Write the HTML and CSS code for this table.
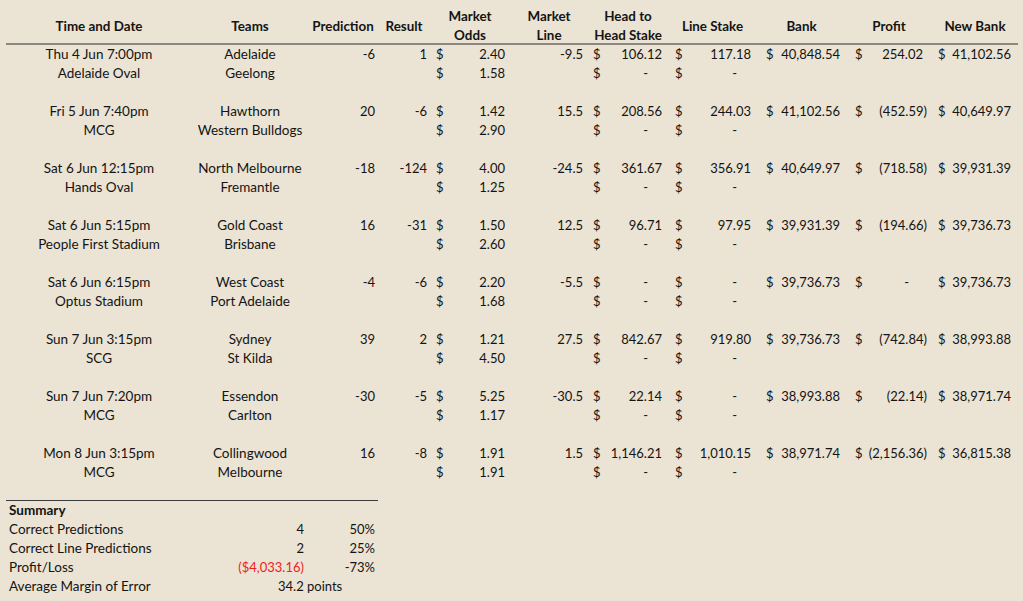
FILE: index.html
```html
<!DOCTYPE html>
<html lang="en">
<head>
<meta charset="utf-8">
<title>Tipping Results</title>
<link rel="stylesheet" href="styles.css">
</head>
<body>
<div class="sheet">
  <div class="grid head">
    <div>Time and Date</div>
    <div>Teams</div>
    <div>Prediction</div>
    <div>Result</div>
    <div>Market<br>Odds</div>
    <div>Market<br>Line</div>
    <div>Head to<br>Head Stake</div>
    <div>Line Stake</div>
    <div>Bank</div>
    <div>Profit</div>
    <div>New Bank</div>
  </div>

  <div class="game">
    <div class="grid row">
      <div class="ctr txt">Thu 4 Jun 7:00pm</div><div class="ctr txt">Adelaide</div><div class="num pred">-6</div><div class="num res">1</div>
      <div class="m odds"><span>$</span><span>2.40</span></div><div class="num line">-9.5</div>
      <div class="m h2h"><span>$</span><span>106.12</span></div><div class="m ls"><span>$</span><span>117.18</span></div>
      <div class="m bank"><span>$</span><span>40,848.54</span></div><div class="m profit"><span>$</span><span>254.02</span></div><div class="m nb"><span>$</span><span>41,102.56</span></div>
    </div>
    <div class="grid row">
      <div class="ctr txt">Adelaide Oval</div><div class="ctr txt">Geelong</div><div></div><div></div>
      <div class="m odds"><span>$</span><span>1.58</span></div><div></div>
      <div class="m h2h"><span>$</span><span class="dash">-</span></div><div class="m ls"><span>$</span><span class="dash">-</span></div>
    </div>
  </div>

  <div class="game">
    <div class="grid row">
      <div class="ctr txt">Fri 5 Jun 7:40pm</div><div class="ctr txt">Hawthorn</div><div class="num pred">20</div><div class="num res">-6</div>
      <div class="m odds"><span>$</span><span>1.42</span></div><div class="num line">15.5</div>
      <div class="m h2h"><span>$</span><span>208.56</span></div><div class="m ls"><span>$</span><span>244.03</span></div>
      <div class="m bank"><span>$</span><span>41,102.56</span></div><div class="m profit"><span>$</span><span class="neg">(452.59)</span></div><div class="m nb"><span>$</span><span>40,649.97</span></div>
    </div>
    <div class="grid row">
      <div class="ctr txt">MCG</div><div class="ctr txt">Western Bulldogs</div><div></div><div></div>
      <div class="m odds"><span>$</span><span>2.90</span></div><div></div>
      <div class="m h2h"><span>$</span><span class="dash">-</span></div><div class="m ls"><span>$</span><span class="dash">-</span></div>
    </div>
  </div>

  <div class="game">
    <div class="grid row">
      <div class="ctr txt">Sat 6 Jun 12:15pm</div><div class="ctr txt">North Melbourne</div><div class="num pred">-18</div><div class="num res">-124</div>
      <div class="m odds"><span>$</span><span>4.00</span></div><div class="num line">-24.5</div>
      <div class="m h2h"><span>$</span><span>361.67</span></div><div class="m ls"><span>$</span><span>356.91</span></div>
      <div class="m bank"><span>$</span><span>40,649.97</span></div><div class="m profit"><span>$</span><span class="neg">(718.58)</span></div><div class="m nb"><span>$</span><span>39,931.39</span></div>
    </div>
    <div class="grid row">
      <div class="ctr txt">Hands Oval</div><div class="ctr txt">Fremantle</div><div></div><div></div>
      <div class="m odds"><span>$</span><span>1.25</span></div><div></div>
      <div class="m h2h"><span>$</span><span class="dash">-</span></div><div class="m ls"><span>$</span><span class="dash">-</span></div>
    </div>
  </div>

  <div class="game">
    <div class="grid row">
      <div class="ctr txt">Sat 6 Jun 5:15pm</div><div class="ctr txt">Gold Coast</div><div class="num pred">16</div><div class="num res">-31</div>
      <div class="m odds"><span>$</span><span>1.50</span></div><div class="num line">12.5</div>
      <div class="m h2h"><span>$</span><span>96.71</span></div><div class="m ls"><span>$</span><span>97.95</span></div>
      <div class="m bank"><span>$</span><span>39,931.39</span></div><div class="m profit"><span>$</span><span class="neg">(194.66)</span></div><div class="m nb"><span>$</span><span>39,736.73</span></div>
    </div>
    <div class="grid row">
      <div class="ctr txt">People First Stadium</div><div class="ctr txt">Brisbane</div><div></div><div></div>
      <div class="m odds"><span>$</span><span>2.60</span></div><div></div>
      <div class="m h2h"><span>$</span><span class="dash">-</span></div><div class="m ls"><span>$</span><span class="dash">-</span></div>
    </div>
  </div>

  <div class="game">
    <div class="grid row">
      <div class="ctr txt">Sat 6 Jun 6:15pm</div><div class="ctr txt">West Coast</div><div class="num pred">-4</div><div class="num res">-6</div>
      <div class="m odds"><span>$</span><span>2.20</span></div><div class="num line">-5.5</div>
      <div class="m h2h"><span>$</span><span class="dash">-</span></div><div class="m ls"><span>$</span><span class="dash">-</span></div>
      <div class="m bank"><span>$</span><span>39,736.73</span></div><div class="m profit"><span>$</span><span class="dash">-</span></div><div class="m nb"><span>$</span><span>39,736.73</span></div>
    </div>
    <div class="grid row">
      <div class="ctr txt">Optus Stadium</div><div class="ctr txt">Port Adelaide</div><div></div><div></div>
      <div class="m odds"><span>$</span><span>1.68</span></div><div></div>
      <div class="m h2h"><span>$</span><span class="dash">-</span></div><div class="m ls"><span>$</span><span class="dash">-</span></div>
    </div>
  </div>

  <div class="game">
    <div class="grid row">
      <div class="ctr txt">Sun 7 Jun 3:15pm</div><div class="ctr txt">Sydney</div><div class="num pred">39</div><div class="num res">2</div>
      <div class="m odds"><span>$</span><span>1.21</span></div><div class="num line">27.5</div>
      <div class="m h2h"><span>$</span><span>842.67</span></div><div class="m ls"><span>$</span><span>919.80</span></div>
      <div class="m bank"><span>$</span><span>39,736.73</span></div><div class="m profit"><span>$</span><span class="neg">(742.84)</span></div><div class="m nb"><span>$</span><span>38,993.88</span></div>
    </div>
    <div class="grid row">
      <div class="ctr txt">SCG</div><div class="ctr txt">St Kilda</div><div></div><div></div>
      <div class="m odds"><span>$</span><span>4.50</span></div><div></div>
      <div class="m h2h"><span>$</span><span class="dash">-</span></div><div class="m ls"><span>$</span><span class="dash">-</span></div>
    </div>
  </div>

  <div class="game">
    <div class="grid row">
      <div class="ctr txt">Sun 7 Jun 7:20pm</div><div class="ctr txt">Essendon</div><div class="num pred">-30</div><div class="num res">-5</div>
      <div class="m odds"><span>$</span><span>5.25</span></div><div class="num line">-30.5</div>
      <div class="m h2h"><span>$</span><span>22.14</span></div><div class="m ls"><span>$</span><span class="dash">-</span></div>
      <div class="m bank"><span>$</span><span>38,993.88</span></div><div class="m profit"><span>$</span><span class="neg">(22.14)</span></div><div class="m nb"><span>$</span><span>38,971.74</span></div>
    </div>
    <div class="grid row">
      <div class="ctr txt">MCG</div><div class="ctr txt">Carlton</div><div></div><div></div>
      <div class="m odds"><span>$</span><span>1.17</span></div><div></div>
      <div class="m h2h"><span>$</span><span class="dash">-</span></div><div class="m ls"><span>$</span><span class="dash">-</span></div>
    </div>
  </div>

  <div class="game">
    <div class="grid row">
      <div class="ctr txt">Mon 8 Jun 3:15pm</div><div class="ctr txt">Collingwood</div><div class="num pred">16</div><div class="num res">-8</div>
      <div class="m odds"><span>$</span><span>1.91</span></div><div class="num line">1.5</div>
      <div class="m h2h"><span>$</span><span>1,146.21</span></div><div class="m ls"><span>$</span><span>1,010.15</span></div>
      <div class="m bank"><span>$</span><span>38,971.74</span></div><div class="m profit"><span>$</span><span class="neg">(2,156.36)</span></div><div class="m nb"><span>$</span><span>36,815.38</span></div>
    </div>
    <div class="grid row">
      <div class="ctr txt">MCG</div><div class="ctr txt">Melbourne</div><div></div><div></div>
      <div class="m odds"><span>$</span><span>1.91</span></div><div></div>
      <div class="m h2h"><span>$</span><span class="dash">-</span></div><div class="m ls"><span>$</span><span class="dash">-</span></div>
    </div>
  </div>

  <div class="summary">
    <div class="srow"><div class="slabel bold">Summary</div></div>
    <div class="srow"><div class="slabel">Correct Predictions</div><div class="sval">4</div><div class="spct">50%</div></div>
    <div class="srow"><div class="slabel">Correct Line Predictions</div><div class="sval">2</div><div class="spct">25%</div></div>
    <div class="srow"><div class="slabel">Profit/Loss</div><div class="sval red">($4,033.16)</div><div class="spct">-73%</div></div>
    <div class="srow"><div class="slabel">Average Margin of Error</div><div class="spoints">34.2 points</div></div>
  </div>
</div>
</body>
</html>
```

FILE: styles.css
```css
body {
  margin: 0;
  background: #ebe3d3;
  font-family: Lato, "Liberation Sans", sans-serif;
  font-size: 13px;
  color: #141414;
}

.sheet {
  width: 1012px;
  margin-left: 6px;
  padding-top: 7px;
}

.grid {
  display: grid;
  grid-template-columns: 186px 116px 70px 52px 80px 78px 80px 89px 89px 86px 86px;
}

.head {
  height: 36px;
  border-bottom: 2px solid #8c8881;
  align-items: center;
  font-weight: 700;
  font-size: 13.4px;
  text-align: center;
  line-height: 19px;
  white-space: nowrap;
}

.game {
  padding-bottom: 19px;
}

.row {
  height: 19px;
  line-height: 19px;
  white-space: nowrap;
}

.ctr {
  text-align: center;
}

.txt {
  font-size: 13.5px;
}

.num {
  text-align: right;
}

.pred { padding-right: 3px; }
.res { padding-right: 3px; }
.line { padding-right: 5px; }

.m {
  display: flex;
  justify-content: space-between;
}

.odds { padding: 0 5px 0 6px; }
.h2h { padding: 0 6px 0 5px; }
.ls { padding: 0 6px 0 7px; }
.bank { padding: 0 6px 0 9px; }
.profit { padding: 0 9px 0 9px; }
.nb { padding: 0 7px 0 6px; }

.dash {
  padding-right: 14px;
}

.neg {
  margin-right: -4px;
}

.summary {
  width: 372px;
  margin-top: -1px;
  border-top: 1px solid #3a3a3a;
}

.srow {
  display: grid;
  grid-template-columns: 186px 116px 70px;
  height: 19px;
  line-height: 19px;
  white-space: nowrap;
}

.slabel {
  padding-left: 3px;
  font-size: 13.5px;
}

.bold {
  font-weight: 700;
}

.sval {
  text-align: right;
  padding-right: 4px;
}

.spct {
  text-align: right;
  padding-right: 3px;
}

.spoints {
  grid-column: 2 / span 2;
  padding-left: 86px;
}

.red {
  color: #f21c1c;
}
```
